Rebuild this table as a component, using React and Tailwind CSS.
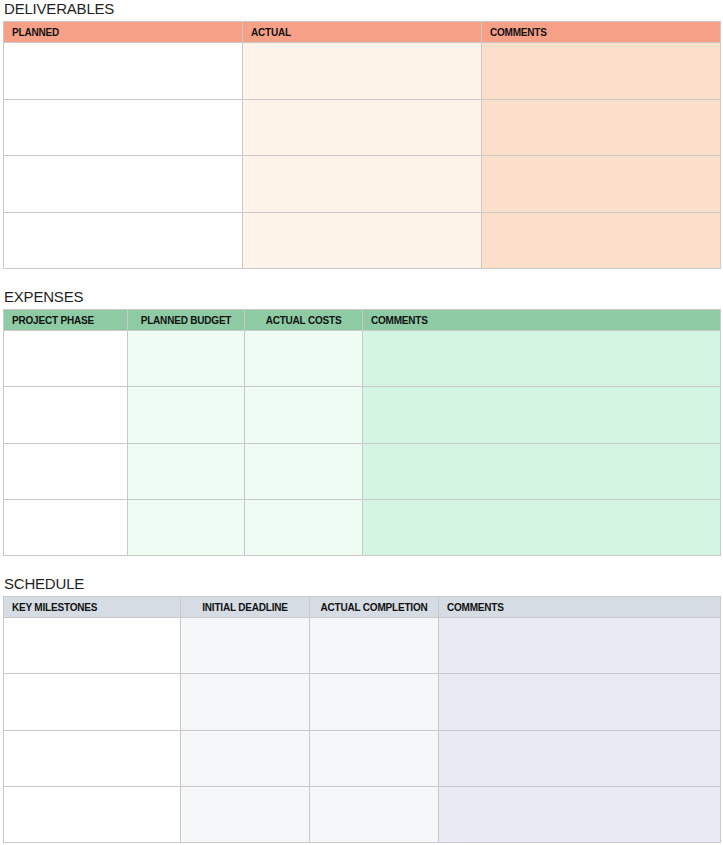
const sections = [
  {
    title: 'DELIVERABLES',
    cols: 'grid-cols-[239px_239px_1fr]',
    head: 'bg-[#f6a088]',
    rowH: 'h-[56.5px]',
    columns: [
      { label: 'PLANNED', align: 'text-left', bg: 'bg-white' },
      { label: 'ACTUAL', align: 'text-left', bg: 'bg-[#fef3e8]' },
      { label: 'COMMENTS', align: 'text-left', bg: 'bg-[#fbdfcb]' },
    ],
  },
  {
    title: 'EXPENSES',
    cols: 'grid-cols-[124px_117px_118px_1fr]',
    head: 'bg-[#8ecba4]',
    rowH: 'h-[56.25px]',
    columns: [
      { label: 'PROJECT PHASE', align: 'text-left', bg: 'bg-white' },
      { label: 'PLANNED BUDGET', align: 'text-center', bg: 'bg-[#eefcf4]' },
      { label: 'ACTUAL COSTS', align: 'text-center', bg: 'bg-[#eefcf4]' },
      { label: 'COMMENTS', align: 'text-left', bg: 'bg-[#d4f5e2]' },
    ],
  },
  {
    title: 'SCHEDULE',
    cols: 'grid-cols-[177px_129px_129px_1fr]',
    head: 'bg-[#d6dce4]',
    rowH: 'h-[56.25px]',
    columns: [
      { label: 'KEY MILESTONES', align: 'text-left', bg: 'bg-white' },
      { label: 'INITIAL DEADLINE', align: 'text-center', bg: 'bg-[#f6f7f9]' },
      { label: 'ACTUAL COMPLETION', align: 'text-center', bg: 'bg-[#f6f7f9]' },
      { label: 'COMMENTS', align: 'text-left', bg: 'bg-[#e8ebf3]' },
    ],
  },
];

const rows = [0, 1, 2, 3];

const Section = ({ section }) => (
  <div className="mb-[20px]">
    <h2 className="pl-[1px] h-[20px] leading-[16px] text-[15px] text-[#1f1f1f] font-normal tracking-[-0.2px]">
      {section.title}
    </h2>
    <div className={`grid ${section.cols} border-l border-t border-[#c9c9c9]`}>
      {section.columns.map((c) => (
        <div
          key={c.label}
          className={`${section.head} ${c.align} h-[21px] border-r border-b border-[#c9c9c9] px-[8px] pt-[1px] text-[10px] font-bold leading-[20px] tracking-[-0.2px] text-[#111]`}
        >
          {c.label}
        </div>
      ))}
      {rows.map((r) =>
        section.columns.map((c) => (
          <div key={`${r}-${c.label}`} className={`${c.bg} ${section.rowH} border-r border-b border-[#c9c9c9]`} />
        ))
      )}
    </div>
  </div>
);

export default function App() {
  return (
    <div className="w-[723px] bg-white pt-[1px] pl-[3px] pr-[2px] font-['Liberation_Sans',Arial,sans-serif]">
      {sections.map((s) => (
        <Section key={s.title} section={s} />
      ))}
    </div>
  );
}
